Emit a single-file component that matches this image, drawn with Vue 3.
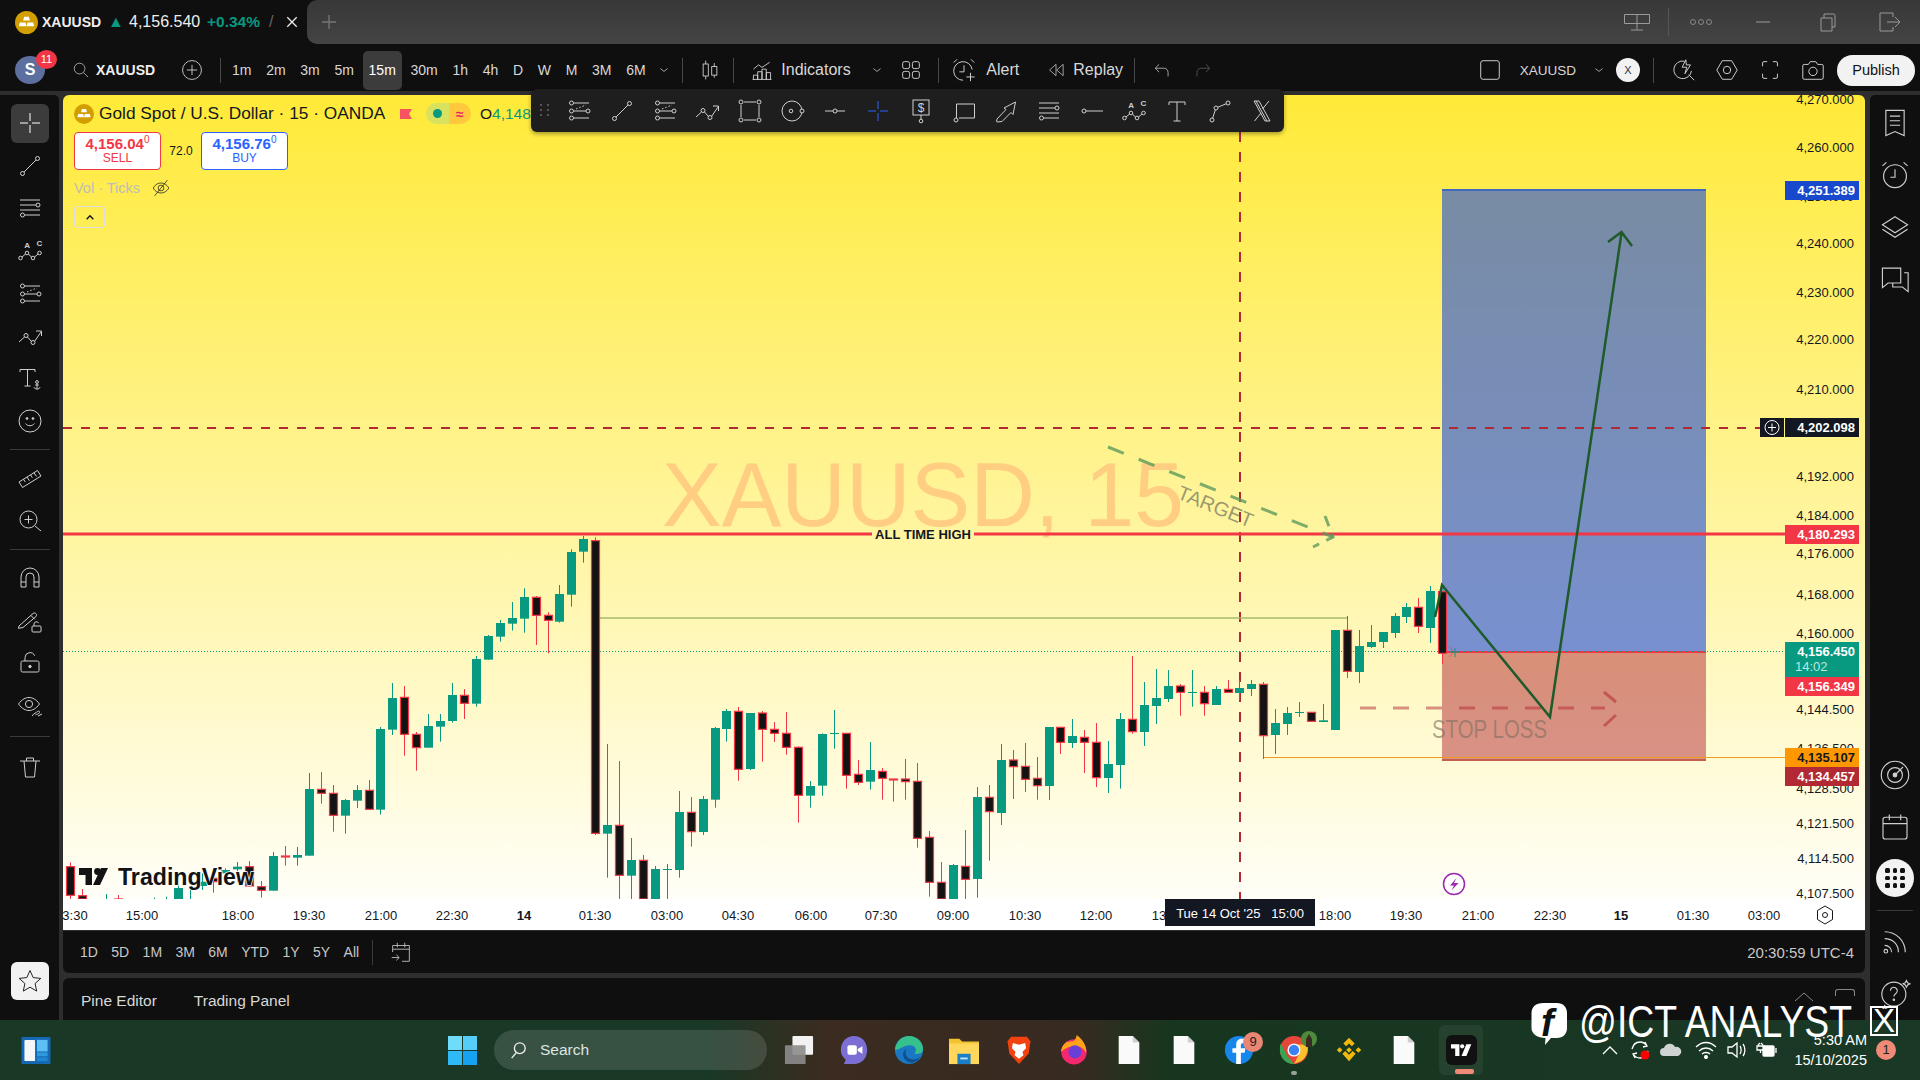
<script setup>
const ic = {
  cross: '<path d="M14 4v8M14 16v8M4 14h8M16 14h8"/>',
  trend: '<circle cx="6.5" cy="21.5" r="2"/><circle cx="21.5" cy="6.5" r="2"/><path d="M8 20 20 8"/>',
  hlines: '<path d="M4 6h20M4 11h16M4 16h20M9 21h15"/><circle cx="22" cy="11" r="2"/><circle cx="6.5" cy="21" r="2"/>',
  abc: '<circle cx="4.5" cy="21" r="1.8"/><circle cx="11" cy="16" r="1.8"/><circle cx="17" cy="21" r="1.8"/><circle cx="23.5" cy="16" r="1.8"/><path d="M6 20 9.6 17M12.4 17.2 15.6 20M18.5 20 22 17"/><text x="8.2" y="11" font-size="8" font-weight="700" fill="currentColor" stroke="none">A</text><text x="20.6" y="9" font-size="8" font-weight="700" fill="currentColor" stroke="none">C</text>',
  fib: '<path d="M9 6h15M9 14h12M9 21h15"/><circle cx="6.5" cy="6" r="2"/><circle cx="6.5" cy="14" r="2"/><circle cx="23" cy="14" r="2"/><circle cx="6.5" cy="21" r="2"/><path stroke-dasharray="1.5 2" d="M11 12 21 8"/>',
  path: '<path d="M3 20 8.5 15M11.5 15l4 4.5M18.5 19.5 25 10M20 9h5.5v5"/><circle cx="10" cy="13.5" r="2"/><circle cx="17" cy="20.5" r="2"/>',
  rect: '<path d="M8 5h12M8 23h12M5 8v12M23 8v12"/><circle cx="5" cy="5" r="2"/><circle cx="23" cy="5" r="2"/><circle cx="5" cy="23" r="2"/><circle cx="23" cy="23" r="2"/>',
  circ: '<circle cx="13" cy="14" r="10"/><circle cx="12" cy="14" r="1.8"/><circle cx="23" cy="14" r="2" fill="#1e1e1e"/>',
  dotline: '<path d="M4 14h8M16 14h8"/><circle cx="14" cy="14" r="2"/>',
  price: '<rect x="6" y="3" width="16" height="15"/><path d="M14 18v4"/><circle cx="14" cy="24" r="1.8"/><text x="14" y="15" text-anchor="middle" font-size="12" fill="currentColor" stroke="none">$</text>',
  callout: '<path d="M6.5 21V7h18v14H9"/><circle cx="6" cy="23" r="2"/>',
  arrow: '<path d="M4.5 24.5 5 22 14 12.5l-2-1.5L23.5 5 21 17.5l-2-2-9 9-5 .5z"/>',
  line: '<circle cx="6" cy="14" r="2"/><path d="M8 14h17"/>',
  text: '<path d="M6 8V5h16v3M14 5v19M10.5 24h7"/>',
  curve: '<circle cx="6" cy="23" r="2"/><circle cx="10" cy="11" r="2"/><circle cx="22" cy="6" r="2"/><path d="M6.7 21 9.3 13M12 10.2 20 6.8"/>',
  xabcd: '<path d="M6 4h5l11 20h-5zM8 4l11 20M21 4l-6.5 8M13 16l-6.5 8"/>',
  textAnchor: '<path d="M4 7V4.5h15V7M11.5 4.5V21M8.5 21h6"/><circle cx="21" cy="17" r="1.4"/><path d="M21 18.4V24M18 22.2c.4 1.4 1.6 1.8 3 1.8s2.6-.4 3-1.8M19.2 20h3.6"/>',
  smile: '<circle cx="14" cy="14" r="11"/><path d="M9.5 16.5c2.4 3 6.6 3 9 0"/><circle cx="11" cy="11.5" r=".9" fill="currentColor"/><circle cx="17" cy="11.5" r=".9" fill="currentColor"/>',
  ruler: '<path d="M3 18 21.5 6.5 25 12 6.5 23.5zM7.5 15.2l1.8 2.8M11 13l2.4 3.7M14.5 10.8l1.8 2.8M18 8.7l2.4 3.7"/>',
  zoom: '<circle cx="12.5" cy="12.5" r="8.5"/><path d="M19 19l6 5M8.5 12.5h8M12.5 8.5v8"/>',
  magnet: '<path d="M5 23V13a9 9 0 0 1 18 0v10h-5V13a4 4 0 0 0-8 0v10zM5 18h5M18 18h5"/>',
  pencil: '<path d="M3 19 17 6.5c1-.8 2.5-.6 3.2.4.6.9.5 2-.3 2.7L7 20.5l-4.5.8zM15 8.5l3.5 3.7"/><rect x="16" y="19" width="9" height="6" rx="1"/><path d="M18 19v-2a2.4 2.4 0 0 1 4.6-.8"/>',
  lock: '<rect x="5" y="12" width="18" height="11" rx="1.5"/><path d="M9 12V8.5a5 5 0 0 1 9.6-1.8"/><circle cx="14" cy="17.5" r="1.2" fill="currentColor"/>',
  eye: '<path d="M2.5 12C6 7 10 5.5 13 5.5s7 1.5 10.5 6.5C20 17 16 18.5 13 18.5S6 17 2.5 12z"/><circle cx="13" cy="12" r="3.6"/><path d="M16 24c2-3 4-3 5.5-4.5 1-1 2.5-.3 2 1-.5 1.6-3 1.6-4 2.4M22 24l4-2"/>',
  trash: '<path d="M4 8h20M8 8l1.5 16h9L20 8M10.5 8V5h7v3"/>',
  star: '<path d="M14 3.5l3.2 7.1 7.6.8-5.7 5.1 1.6 7.6-6.7-3.9-6.7 3.9 1.6-7.6-5.7-5.1 7.6-.8z"/>',
  news: '<path d="M6 3h16v22l-8-3.5L6 25zM9.5 8h9M9.5 12h9M9.5 16h9"/>',
  alarm: '<circle cx="14" cy="15" r="10"/><path d="M14 9v7h-4M3 6l3.5-3M25 6l-3.5-3"/>',
  layers: '<path d="M14 5l11 7-11 7-11-7zM3 16l11 7 11-7"/>',
  chat: '<path d="M3 4.5h16v13H8l-5 4zM22 8.5h3.5v16.5l-5-4H12v-3.5"/>',
  radar: '<circle cx="14" cy="14" r="12"/><circle cx="14" cy="14" r="6.5"/><circle cx="14" cy="14" r="1.6" fill="currentColor"/><path d="M14 14 21 7"/>',
  calendar: '<rect x="3.5" y="5.5" width="21" height="19" rx="2"/><path d="M3.5 11h21M9 3v5M19 3v5"/>',
  rss: '<path d="M5 5c10 0 18 8 18 18M5 11c7 0 12 5 12 12M5 17c3.5 0 6 2.5 6 6"/><circle cx="6" cy="22" r="1.6"/>',
  help: '<circle cx="13" cy="15" r="10.5"/><path d="M10 12a3 3 0 1 1 4.8 2.4c-1.1.8-1.8 1.3-1.8 2.6"/><circle cx="13" cy="20" r=".6" fill="currentColor"/><path d="M24 3l1 2 2 1-2 1-1 2-1-2-2-1 2-1zM5 25l.7 1.3 1.3.7-1.3.7L5 29l-.7-1.3L3 27l1.3-.7z"/>',
  candles: '<path d="M9 3v4M9 21v4M19 6v4M19 20v3"/><rect x="6" y="7" width="6" height="14"/><rect x="16" y="10" width="6" height="10"/>',
  indicators: '<path d="M4 13l6-5 4 3 9-6M4 25v-5h5v5M9 25v-9h5v9M14 25V13h5v12M19 25v-8h5v8M3 25h22"/>',
  grid4: '<rect x="5" y="5" width="7.5" height="7.5" rx="2"/><rect x="15.5" y="5" width="7.5" height="7.5" rx="2"/><rect x="5" y="15.5" width="7.5" height="7.5" rx="2"/><rect x="15.5" y="15.5" width="7.5" height="7.5" rx="2"/>',
  alert: '<path d="M22.8 13.5A10 10 0 1 0 13 25M14 9v7h-5M3 6l3.5-3.5M25 6l-3.5-3.5M21 17v9M16.5 21.5h9"/>',
  replay: '<path d="M14 6 5 14l9 8zM24 6l-9 8 9 8z"/>',
  undo: '<path d="M10 6 4.5 11.5 10 17M5 11.5h11.5c3.5 0 6 2.5 6 6V23"/>',
  redo: '<path d="M18 6l5.5 5.5L18 17M23 11.5H11.5c-3.5 0-6 2.5-6 6V23"/>',
  square: '<rect x="4" y="4" width="20" height="20" rx="2.5"/>',
  lens: '<path d="M14.5 4.5A9.5 9.5 0 1 0 22 15M16 3l-4 8h5l-2 7 6-9.5h-4.5zM19 19l6 6"/>',
  hex: '<path d="M9 4h10l6 10-6 10H9L3 14z"/><circle cx="14" cy="14" r="4"/>',
  screen: '<path d="M6 10V6.5A1.5 1.5 0 0 1 7.5 5H11M17 5h3.5A1.5 1.5 0 0 1 22 6.5V10M22 18v3.5a1.5 1.5 0 0 1-1.5 1.5H17M11 23H7.5A1.5 1.5 0 0 1 6 21.5V18"/>',
  camera: '<path d="M3 9.5A1.5 1.5 0 0 1 4.5 8H9l2-3h6l2 3h4.5A1.5 1.5 0 0 1 25 9.5v13a1.5 1.5 0 0 1-1.5 1.5h-19A1.5 1.5 0 0 1 3 22.5z"/><circle cx="14" cy="15.5" r="4.5"/>',
  search: '<circle cx="12" cy="12" r="7.5"/><path d="M17.5 17.5 24 24"/>',
  addc: '<circle cx="14" cy="14" r="11"/><path d="M14 8v12M8 14h12"/>',
  dateRange: '<path d="M5 7h18v17h-8M5 7v7M5 11h18M10 4v5M18 4v5M4 20h8M9 17l3 3-3 3"/>',
  eyeOff: '<path d="M3 14c3-5 7-7 11-7s8 2 11 7c-3 5-7 7-11 7s-8-2-11-7z"/><circle cx="14" cy="14" r="4"/><path d="M5 25 23 3"/>',
  chevD: '<path d="M9 12l5 4 5-4"/>',
  split: '<path d="M1.5 1.5h25v9h-25zM14 1.5v15M8 17h12"/>',
  minimize: '<path d="M7 14h14"/>',
  restore: '<path d="M9 10h11v13H9zM12 10V6h9.5A1.5 1.5 0 0 1 23 7.5V19h-3"/>',
  exit: '<path d="M18 9V5H5v18h13v-4M12 14h13M20 9l5 5-5 5"/>'
}

const leftGroups = [
  ['cross', 'trend', 'hlines', 'abc', 'fib', 'path', 'textAnchor', 'smile'],
  ['ruler', 'zoom'],
  ['magnet', 'pencil', 'lock', 'eye'],
  ['trash']
]
const rightTop = ['news', 'alarm', 'layers', 'chat']
const drawTools = ['fib', 'trend', 'fib', 'path', 'rect', 'circ', 'dotline', 'cross', 'price', 'callout', 'arrow', 'hlines', 'line', 'abc', 'text', 'curve', 'xabcd']
const intervals = ['1m', '2m', '3m', '5m', '15m', '30m', '1h', '4h', 'D', 'W', 'M', '3M', '6M']
const ranges = ['1D', '5D', '1M', '3M', '6M', 'YTD', '1Y', '5Y', 'All']

// scale labels: text, centre y
const prices = [
  ['4,270.000', 99], ['4,260.000', 147], ['4,250.000', 196], ['4,240.000', 243], ['4,230.000', 292],
  ['4,220.000', 339], ['4,210.000', 389], ['4,192.000', 476], ['4,184.000', 515], ['4,176.000', 553],
  ['4,168.000', 594], ['4,160.000', 633], ['4,144.500', 709], ['4,136.500', 748], ['4,128.500', 788],
  ['4,121.500', 823], ['4,114.500', 858], ['4,107.500', 893]
]
const times = [
  ['3:30', 75], ['15:00', 142], ['18:00', 238], ['19:30', 309], ['21:00', 381], ['22:30', 452], ['14', 524, 1],
  ['01:30', 595], ['03:00', 667], ['04:30', 738], ['06:00', 811], ['07:30', 881], ['09:00', 953], ['10:30', 1025],
  ['12:00', 1096], ['13:30', 1168], ['18:00', 1335], ['19:30', 1406], ['21:00', 1478], ['22:30', 1550], ['15', 1621, 1],
  ['01:30', 1693], ['03:00', 1764]
]
const tags = [
  { y: 181, h: 19, bg: '#1848cc', fg: '#fff', t: '4,251.389' },
  { y: 418, h: 19, bg: '#131722', fg: '#fff', t: '4,202.098' },
  { y: 525, h: 19, bg: '#f23645', fg: '#fff', t: '4,180.293' },
  { y: 677, h: 19, bg: '#f23645', fg: '#fff', t: '4,156.349' },
  { y: 748, h: 19, bg: '#ff9800', fg: '#131722', t: '4,135.107' },
  { y: 767, h: 19, bg: '#b22833', fg: '#fff', t: '4,134.457' }
]

// candles: wick high, body top, body bottom, wick low, up
const raw = [
  [1027,1040,1126,1137,0],[1107,1127,1137,1137,0],[1200,1200,1200,1200,1],[1122,1137,1137,1137,1],[1125,1137,1137,1137,0],
  [1200,1200,1200,1200,1],[1200,1200,1200,1200,1],[1133,1137,1137,1137,1],[1130,1137,1137,1137,1],[1095,1104,1137,1137,1],
  [1105,1137,1137,1137,1],[1060,1085,1098,1110,1],[1065,1075,1085,1118,0],[1045,1050,1060,1078,1],[1026,1040,1048,1085,1],
  [1023,1040,1098,1100,0],[1083,1100,1111,1133,0],[996,1008,1112,1112,1],[978,1008,1010,1037,0],[981,1005,1013,1037,1],
  [759,807,1007,1007,1],[756,808,820,851,0],[795,820,886,935,0],[837,840,887,941,1],[795,810,842,864,1],
  [780,811,868,868,0],[621,627,869,884,1],[489,534,629,645,1],[498,532,643,707,0],[636,643,683,752,0],
  [582,618,683,683,1],[582,603,620,665,1],[489,525,603,608,1],[507,526,550,597,0],[408,417,551,560,1],
  [345,348,419,419,1],[300,309,350,365,1],[246,294,311,332,1],[205,231,296,338,1],[228,232,286,375,0],
  [277,286,301,400,0],[195,222,305,308,1],[88,96,224,260,1],[48,57,95,128,1],[52,62,940,945,0],
  [672,915,941,1073,1],[723,916,1066,1137,0],[954,1020,1067,1137,1],[1005,1021,1137,1137,0],[1038,1047,1137,1137,1],
  [1032,1047,1049,1137,1],[813,876,1050,1073,1],[831,877,935,980,0],[828,837,936,945,1],[621,624,839,863,1],
  [567,573,627,665,1],[561,574,748,782,0],[579,579,747,750,1],
  [573,579,628,725,0],[606,628,640,666,0],[576,640,682,704,0],[679,682,826,908,0],[783,798,827,863,1],
  [640,642,797,827,1],[570,639,641,686,1],[640,640,766,806,0],[720,763,787,795,0],[666,750,785,809,1],
  [744,754,775,839,0],[777,777,779,845,0],[717,777,785,839,0],[729,784,955,983,0],[933,952,1087,1130,0],
  [1026,1087,1137,1137,0],[1032,1035,1137,1137,1],[930,1039,1078,1137,0],[801,831,1077,1133,1],[795,832,875,1022,0],
  [672,720,879,915,1],[690,720,740,837,0],[669,739,778,816,0],[711,775,797,839,0],[621,621,798,840,1],
  [621,622,667,702,0],[597,648,669,684,1],[630,652,667,759,0],[609,667,773,801,0],[663,732,774,819,1],
  [579,597,735,806,1],[408,598,635,641,0],[486,555,636,678,1],[447,534,558,612,1],[450,498,537,546,1],
  [492,498,517,587,0],[450,516,519,560,1],[498,517,551,587,0],[498,507,555,555,1],[480,508,517,517,0],
  [480,504,519,541,1],[480,492,507,528,1],[486,493,647,717,0],[567,609,645,702,1],[561,579,612,645,1],
  [546,576,578,591,1],[576,577,604,606,0],[552,601,606,606,1],[330,330,630,630,1],[288,331,454,474,0],
  [330,378,456,489,1],[315,366,381,384,1],[336,336,366,384,1],[279,288,339,354,1],[249,261,291,309,1],
  [234,262,319,339,0],[198,213,324,369,1],[215,215,400,432,0]
]
const py = (v) => 520 + v / 3
const bars = raw.map((b, i) => ({
  x: Math.round(70.3 + i * 11.93),
  hi: py(b[0]),
  top: py(b[1]),
  h: Math.max(py(b[2]) - py(b[1]), 1),
  lo: py(b[3]),
  up: b[4] === 1
}))

const apps = ['task', 'meet', 'edge', 'folder', 'brave', 'firefox', 'doc', 'doc', 'fb', 'chrome', 'binance', 'doc']
</script>

<template>
  <div class="screen">
    <header class="titlebar">
      <div class="tab">
        <svg class="gold" viewBox="0 0 24 24"><circle cx="12" cy="12" r="12" fill="#d39e00"/><path d="M9.5 6h5l1 4h-7zM5 12h6l1 4H4zM13 12h6l1 4h-8z" fill="#fff"/></svg>
        <b class="sym">XAUUSD</b>
        <span class="tri">▲</span>
        <span class="tp">4,156.540</span>
        <b class="tc">+0.34%</b>
        <span class="ts">/</span>
        <svg class="tx" viewBox="0 0 14 14"><path d="M1.5 1.5l11 11M12.5 1.5l-11 11"/></svg>
      </div>
      <div class="winrest">
        <svg class="tplus" viewBox="0 0 16 16"><path d="M8 0v16M0 8h16"/></svg>
        <div class="fill"></div>
        <svg class="ic dim wide" viewBox="0 0 28 18" v-html="ic.split"></svg>
        <i class="wsep"></i>
        <svg class="dots" viewBox="0 0 24 8"><circle cx="4" cy="4" r="2.5"/><circle cx="12" cy="4" r="2.5"/><circle cx="20" cy="4" r="2.5"/></svg>
        <svg class="ic dim wbtn" viewBox="0 0 28 28" v-html="ic.minimize"></svg>
        <svg class="ic dim wbtn" viewBox="0 0 28 28" v-html="ic.restore"></svg>
        <svg class="ic dim wbtn" viewBox="0 0 28 28" v-html="ic.exit"></svg>
      </div>
    </header>

    <nav class="toolbar">
      <div class="avatar">S<span class="badge">11</span></div>
      <svg class="ic sic" viewBox="0 0 28 28" v-html="ic.search"></svg>
      <b class="tsym">XAUUSD</b>
      <svg class="ic addc" viewBox="0 0 28 28" v-html="ic.addc"></svg>
      <i class="sep"></i>
      <div class="ivs">
        <span v-for="iv in intervals" :key="iv" class="iv" :class="{ on: iv === '15m' }">{{ iv }}</span>
        <svg class="ic chev" viewBox="0 0 28 28" v-html="ic.chevD"></svg>
      </div>
      <i class="sep s2"></i>
      <svg class="ic cndl" viewBox="0 0 28 28" v-html="ic.candles"></svg>
      <i class="sep s3"></i>
      <svg class="ic ind" viewBox="0 0 28 28" v-html="ic.indicators"></svg>
      <span class="lbl ind-l">Indicators</span>
      <svg class="ic chev ind-c" viewBox="0 0 28 28" v-html="ic.chevD"></svg>
      <svg class="ic grid4" viewBox="0 0 28 28" v-html="ic.grid4"></svg>
      <i class="sep s4"></i>
      <svg class="ic al" viewBox="0 0 28 28" v-html="ic.alert"></svg>
      <span class="lbl al-l">Alert</span>
      <svg class="ic re" viewBox="0 0 28 28" v-html="ic.replay"></svg>
      <span class="lbl re-l">Replay</span>
      <i class="sep s5"></i>
      <svg class="ic un" viewBox="0 0 28 28" v-html="ic.undo"></svg>
      <svg class="ic rd" viewBox="0 0 28 28" v-html="ic.redo"></svg>
      <div class="fill"></div>
      <svg class="ic sq" viewBox="0 0 28 28" v-html="ic.square"></svg>
      <span class="xs">XAUUSD</span>
      <svg class="ic chev xc" viewBox="0 0 28 28" v-html="ic.chevD"></svg>
      <span class="xbtn">X</span>
      <i class="sep s6"></i>
      <svg class="ic r-i" viewBox="0 0 28 28" v-html="ic.lens"></svg>
      <svg class="ic r-i" viewBox="0 0 28 28" v-html="ic.hex"></svg>
      <svg class="ic r-i" viewBox="0 0 28 28" v-html="ic.screen"></svg>
      <svg class="ic r-i" viewBox="0 0 28 28" v-html="ic.camera"></svg>
      <button class="publish">Publish</button>
    </nav>

    <main class="body">
      <aside class="lefttools">
        <template v-for="(g, gi) in leftGroups" :key="gi">
          <i v-if="gi" class="lsep" :class="{ tight: gi === 1, last: gi === 3 }"></i>
          <div v-for="n in g" :key="n" class="ltool" :class="{ on: n === 'cross' }">
            <svg class="ic" viewBox="0 0 28 28" v-html="ic[n]"></svg>
          </div>
        </template>
        <div class="starbtn"><svg class="ic" viewBox="0 0 28 28" v-html="ic.star"></svg></div>
      </aside>

      <section class="center">
        <div class="chart">
          <svg class="plot" width="1802" height="835" viewBox="63 95 1802 835">
            <defs>
              <linearGradient id="paper" x1="0" y1="0" x2="0" y2="1">
                <stop offset="0" stop-color="#ffea38"/>
                <stop offset="1" stop-color="#ffffff"/>
              </linearGradient>
            </defs>
            <rect x="63" y="95" width="1802" height="835" fill="url(#paper)"/>
            <rect x="63" y="899" width="1802" height="31" fill="#fff"/>
            <text x="662" y="526" textLength="522" lengthAdjust="spacingAndGlyphs" class="mark">XAUUSD, 15</text>
            <rect x="1442" y="190" width="264" height="462" fill="rgba(30,75,220,.6)"/>
            <rect x="1442" y="652" width="264" height="109" fill="rgba(178,40,51,.5)"/>
            <path d="M1442 190h264" stroke="#3f68c0" stroke-width="2"/>
            <path d="M1442 652h264" stroke="#f23645" stroke-width="2"/>
            <path d="M1442 760h264" stroke="#c0503c" stroke-width="1.5"/>
            <path d="M63 651.5H1785" stroke="#089981" stroke-dasharray="1 2"/>
            <path d="M63 428H1785" stroke="#b22833" stroke-width="1.8" stroke-dasharray="9 9"/>
            <path d="M1240 132V899" stroke="#b22833" stroke-width="2" stroke-dasharray="10 10"/>
            <path d="M63 534H872M974 534H1785" stroke="#f23645" stroke-width="3"/>
            <path d="M600 618H1347" stroke="#a6ba6e" stroke-width="1.5"/>
            <path d="M1263 757.5H1785" stroke="#f09a1e" stroke-width="1.2"/>
            <text x="923" y="539" class="ath">ALL TIME HIGH</text>
            <g>
              <svg x="63" y="95" width="1722" height="804" viewBox="63 95 1722 804">
                <g v-for="(b, i) in bars" :key="i">
                  <path :d="`M${b.x + 0.5} ${b.hi}V${b.lo}`" :stroke="b.up ? '#089981' : '#f23645'"/>
                  <rect v-if="b.up" :x="b.x - 4" :y="b.top" width="9" :height="b.h" fill="#089981"/>
                  <rect v-else :x="b.x - 3.5" :y="b.top" width="8" :height="b.h" fill="#131313" stroke="#f23645" stroke-width="1.2"/>
                </g>
              </svg>
            </g>
            <path d="M1108 447 1333 537" stroke="#5e9a5c" stroke-opacity=".8" stroke-width="3" stroke-dasharray="17 16" fill="none"/>
            <path d="M1325 516 1333 537 1313 547" stroke="#5e9a5c" stroke-opacity=".8" stroke-width="3" stroke-dasharray="11 8" fill="none"/>
            <text transform="translate(1176 498) rotate(22)" class="tgt">TARGET</text>
            <path d="M1360 708H1605" stroke="#b22833" stroke-opacity=".5" stroke-width="3" stroke-dasharray="16 17" fill="none"/>
            <path d="M1604 692 1616 702M1616 715 1604 726" stroke="#b22833" stroke-opacity=".55" stroke-width="3" fill="none"/>
            <text x="1432" y="738" textLength="115" lengthAdjust="spacingAndGlyphs" class="stop">STOP LOSS</text>
            <path d="M1435 617 1442 585 1550 717 1621.5 233M1608 242 1621.5 232 1632 246" stroke="#1e5a2a" stroke-width="2.5" fill="none"/>
            <path d="M1450 652h9M1455 648v9" stroke="#089981"/>
            <path d="M1449 646l5 6-5 5" stroke="#f23645" stroke-opacity=".6" fill="none"/>
            <circle cx="1454" cy="884" r="10.5" fill="#fff" stroke="#9c27b0" stroke-width="1.5"/>
            <path d="M1456.5 878 1450 885.5h4l-2.5 5 7-7.5h-4.5z" fill="#9c27b0"/>

            <g class="tvmark">
              <path d="M79 868h13v17h-6.5V875H79zM108 868 100 885h-7l8-17z" stroke="#fff" stroke-width="1" paint-order="stroke"/>
              <circle cx="97.5" cy="871.5" r="3.4"/>
              <text x="118" y="885" textLength="136" lengthAdjust="spacingAndGlyphs" class="tvtext">TradingView</text>
            </g>

            <text v-for="p in prices" :key="p[0]" x="1854" :y="p[1] + 5" class="px">{{ p[0] }}</text>
            <g v-for="t in tags" :key="t.t">
              <rect x="1785" :y="t.y" width="74" :height="t.h" :fill="t.bg"/>
              <text x="1855" :y="t.y + 14" class="tagt" :fill="t.fg">{{ t.t }}</text>
            </g>
            <rect x="1785" y="642" width="74" height="35" fill="#089981"/>
            <text x="1855" y="656" class="tagt" fill="#fff">4,156.450</text>
            <text x="1795" y="671" class="cnt">14:02</text>
            <rect x="1760" y="418" width="24" height="19" fill="#131722"/>
            <circle cx="1772" cy="427.5" r="7" fill="none" stroke="#fff"/>
            <path d="M1772 423.5v8M1768 427.5h8" stroke="#fff"/>

            <text v-for="t in times" :key="t[0] + t[1]" :x="t[1]" y="920" class="tm" :class="{ bold: t[2] }">{{ t[0] }}</text>
            <rect x="1165" y="899" width="150" height="27" fill="#131722"/>
            <text x="1240" y="918" class="tmc">Tue 14 Oct '25&#160;&#160;&#160;15:00</text>
            <path d="M1825 906l7.5 4.5v9l-7.5 4.5-7.5-4.5v-9z" fill="none" stroke="#131722"/>
            <circle cx="1825" cy="915" r="2.5" fill="none" stroke="#131722"/>
          </svg>

          <div class="legend">
            <div class="lrow">
              <svg class="gold2" viewBox="0 0 24 24"><circle cx="12" cy="12" r="12" fill="#d39e00"/><path d="M9.5 6h5l1 4h-7zM5 12h6l1 4H4zM13 12h6l1 4h-8z" fill="#fff"/></svg>
              <span class="lname">Gold Spot / U.S. Dollar · 15 · OANDA</span>
              <svg class="flag" viewBox="0 0 12 10"><path d="M0 0h12L9 5l3 5H0z" fill="#f7525f"/></svg>
              <span class="pill"><em class="pl"><i></i></em><em class="pr">≈</em></span>
              <span class="ohlc">O<b>4,148.</b></span>
            </div>
            <div class="trade">
              <div class="tbox sell"><b>4,156.04<sup>0</sup></b><span>SELL</span></div>
              <span class="spread">72.0</span>
              <div class="tbox buy"><b>4,156.76<sup>0</sup></b><span>BUY</span></div>
            </div>
            <div class="vol">
              <span>Vol · Ticks</span>
              <svg class="ic v-e" viewBox="0 0 28 28" v-html="ic.eyeOff"></svg>
            </div>
            <div class="collapse"><svg viewBox="0 0 12 8"><path d="M2 6l4-4 4 4"/></svg></div>
          </div>

          <div class="drawbar">
            <span class="grip"><i v-for="n in 6" :key="n"></i></span>
            <span v-for="(n, i) in drawTools" :key="i" class="dt" :class="{ blue: i === 7 }">
              <svg class="ic" viewBox="0 0 28 28" v-html="ic[n]"></svg>
            </span>
          </div>
        </div>

        <div class="ranges">
          <span v-for="r in ranges" :key="r" class="rg">{{ r }}</span>
          <i class="rsep"></i>
          <svg class="ic rcal" viewBox="0 0 28 28" v-html="ic.dateRange"></svg>
          <div class="fill"></div>
          <span class="clock">20:30:59 UTC-4</span>
        </div>

        <div class="panel">
          <span class="ptab">Pine Editor</span>
          <span class="ptab">Trading Panel</span>
          <div class="fill"></div>
          <svg class="pup" viewBox="0 0 20 10"><path d="M1 9l9-8 9 8"/></svg>
          <i class="pmax"></i>
        </div>
      </section>

      <aside class="righttools">
        <div v-for="n in rightTop" :key="n" class="rtool"><svg class="ic" viewBox="0 0 28 28" v-html="ic[n]"></svg></div>
        <div class="fill"></div>
        <div class="rtool"><svg class="ic" viewBox="0 0 28 28" v-html="ic.radar"></svg></div>
        <div class="rtool"><svg class="ic" viewBox="0 0 28 28" v-html="ic.calendar"></svg></div>
        <div class="appsbtn"><i v-for="n in 9" :key="n"></i></div>
        <i class="rsp"></i>
        <div class="rtool"><svg class="ic" viewBox="0 0 28 28" v-html="ic.rss"></svg></div>
        <div class="rtool hp"><svg class="ic" viewBox="0 0 28 28" v-html="ic.help"></svg></div>
      </aside>
    </main>

    <footer class="taskbar">
      <svg class="widgets" viewBox="0 0 30 28">
        <rect width="30" height="28" rx="1" fill="#1668b4"/>
        <rect x="3" y="3" width="11" height="22" rx="1" fill="#f4f6f8"/>
        <rect x="16" y="3" width="11" height="12" fill="#5cc0f4"/>
        <rect x="16" y="16" width="11" height="4" fill="#2e9be0"/>
        <rect x="16" y="21" width="11" height="4" fill="#1f85ce"/>
      </svg>
      <svg class="start" viewBox="0 0 29 29">
        <rect width="14" height="14" fill="#6fdcfb"/><rect x="15" width="14" height="14" fill="#55cdf8"/>
        <rect y="15" width="14" height="14" fill="#2dbaf6"/><rect x="15" y="15" width="14" height="14" fill="#16a2f0"/>
      </svg>
      <div class="searchbox">
        <svg viewBox="0 0 20 20"><circle cx="12" cy="8" r="6"/><path d="M8 13l-5 6"/></svg>
        <span>Search</span>
      </div>
      <span v-for="(a, i) in apps" :key="i" class="app">
        <svg v-if="a === 'task'" viewBox="0 0 32 32"><rect x="9" y="1" width="22" height="20" rx="1" fill="#f2f2f2"/><rect x="1" y="11" width="22" height="20" rx="1" fill="#8c8c8c" opacity=".9"/></svg>
        <svg v-else-if="a === 'meet'" viewBox="0 0 32 32"><path d="M16 1c8 0 14 6 14 15s-6 15-14 15H5c1-2 2-3 2-5-4-3-5-7-5-10C2 7 8 1 16 1z" fill="#7b6fd6"/><rect x="9" y="11" width="10" height="10" rx="2" fill="#fff"/><path d="M20 15l5-3v8l-5-3z" fill="#fff"/></svg>
        <svg v-else-if="a === 'edge'" viewBox="0 0 32 32"><circle cx="16" cy="16" r="15" fill="#1a78c2"/><path d="M1 16C2 6 9 1 16 1c9 0 15 7 15 14 0 4-4 6-9 5 3-4 1-9-5-9-7 0-11 5-16 5z" fill="#36c08c"/><path d="M14 28c-5-3-6-10-1-13-3 8 4 12 9 11 2-.5 4-1 6-3-3 6-9 8-14 5z" fill="#0f4f8f"/></svg>
        <svg v-else-if="a === 'folder'" viewBox="0 0 32 32"><path d="M0 4h11l3 3h18v24H0z" fill="#f4c430"/><path d="M0 9h32v22H0z" fill="#ffd75a"/><rect x="9" y="20" width="14" height="11" fill="#1a7fc8"/><rect x="12" y="24" width="8" height="2" fill="#bfe3fa"/></svg>
        <svg v-else-if="a === 'brave'" viewBox="0 0 30 34"><path d="M6 2h18l4 5-2 14-11 12L4 21 2 7z" fill="#f1420f"/><path d="M8 9l7 2 7-2 1 6-4 4 1 4-5 4-5-4 1-4-4-4z" fill="#fff"/></svg>
        <svg v-else-if="a === 'firefox'" viewBox="0 0 32 32"><circle cx="16" cy="18" r="13.5" fill="#f5276f"/><path d="M2 18C3 9 9 6 14 7c4-1 4-4 5-7 2 2 11 8 10 19-4-7-9-7-13-7-6 0-10 3-14 6z" fill="#ffa31a"/><circle cx="17" cy="18" r="7" fill="#6a3fd6"/></svg>
        <svg v-else-if="a === 'doc'" viewBox="0 0 24 32"><path d="M1 1h15l7 7v23H1z" fill="#fafafa"/><path d="M16 1v7h7" fill="#cfcfcf"/></svg>
        <svg v-else-if="a === 'fb'" viewBox="0 0 32 32"><circle cx="16" cy="16" r="15" fill="#1787ec"/><path d="M18 31V19h4l.8-5H18v-3c0-1.5.7-2.5 2.7-2.5H23V4.2C21 4 20 4 18.8 4 15 4 13 6.5 13 10.5V14H9v5h4v12z" fill="#fff"/></svg>
        <svg v-else-if="a === 'chrome'" viewBox="0 0 32 32"><circle cx="16" cy="16" r="15" fill="#e6453a"/><path d="M2 9l7 14 7 8C7 31 1 24 1 16c0-3 0-5 1-7z" fill="#33a853"/><path d="M16 10h14c2 5 0 14-7 18l-7 3 7-14z" fill="#fbc02d"/><circle cx="16" cy="16" r="7" fill="#fff"/><circle cx="16" cy="16" r="5.5" fill="#3b82f6"/></svg>
        <svg v-else-if="a === 'binance'" viewBox="0 0 32 32" fill="#f0b90b"><path d="M16 3l6 6-3 3-3-3-3 3-3-3zM6 13l3 3-3 3-3-3zM26 13l3 3-3 3-3-3zM16 13l3 3-3 3-3-3zM9 20l3-3 4 4 4-4 3 3-7 8z"/></svg>
        <span v-if="a === 'fb'" class="count">9</span>
        <svg v-if="a === 'chrome'" class="peer" viewBox="0 0 16 20"><circle cx="8" cy="10" r="8" fill="#4d8a3a"/><path d="M5 18V10l3-5 3 5v8z" fill="#3a2c22"/></svg>
        <i v-if="a === 'chrome'" class="open"></i>
      </span>
      <span class="app tvapp">
        <span class="tvicon"><svg viewBox="0 0 30 18" fill="#fff"><path d="M0 0h12v17H6V6H0z"/><circle cx="16" cy="3" r="3"/><path d="M29 0 22 17h-7l7-17z"/></svg></span>
        <i class="tvbar"></i>
      </span>
      <div class="fill"></div>
      <div class="tray">
        <svg class="t1" viewBox="0 0 16 10"><path d="M1 9l7-7 7 7"/></svg>
        <svg class="t2" viewBox="0 0 20 20"><path d="M2 9c1-4 4-7 8-7 3 0 5 1 7 4M15 2l2 4-4 1M18 11c-1 4-4 7-8 7-3 0-5-1-7-4M5 18l-2-4 4-1"/><circle class="rec" cx="15" cy="15" r="4.5"/></svg>
        <svg class="t3" viewBox="0 0 22 14"><path d="M4 13a4 4 0 0 1 0-8 6 6 0 0 1 11-1 4.5 4.5 0 0 1 3 9z" fill="#cfd4d2" stroke="none"/></svg>
        <svg class="t4" viewBox="0 0 22 18"><path d="M1 6c6-6 14-6 20 0M4 10c4-4 10-4 14 0M7 13c2-2 6-2 8 0"/><circle cx="11" cy="16" r="1.4" fill="#fff"/></svg>
        <svg class="t5" viewBox="0 0 20 18"><path d="M1 6h4l5-4v14l-5-4H1zM13 5c1.5 2 1.5 6 0 8M16 3c2.5 3 2.5 9 0 12"/></svg>
        <svg class="t6" viewBox="0 0 22 16"><path d="M2 3l2-2M7 3 5 1M1 4h7v4H1zM4.5 8v3"/><rect x="7" y="4" width="11" height="10" rx="1" fill="#fff"/><path d="M20 6v5"/></svg>
        <div class="when"><span>5:30 AM</span><span>15/10/2025</span></div>
        <span class="note">1</span>
      </div>
    </footer>

    <svg class="brand" width="390" height="50" viewBox="1530 1000 390 50">
      <path d="M1543 1003h14c6 0 10 4 10 10v15c0 6-4 10-10 10h-6l-6 7 .5-7c-8 0-14-4-14-10v-15c0-6 4-10 12-10z" fill="#fff"/>
      <text x="1541" y="1036" class="f">f</text>
      <text x="1579" y="1037" textLength="273" lengthAdjust="spacingAndGlyphs" class="handle">@ICT ANALYST</text>
      <rect x="1871" y="1007" width="26" height="28" fill="none" stroke="#fff" stroke-width="2"/>
      <text x="1884" y="1032" text-anchor="middle" class="handlex">X</text>
    </svg>
  </div>
</template>

<style>
html, body { margin: 0; background: #0f0f0f; }
</style>

<style scoped>
.screen {
  position: relative;
  width: 1920px;
  height: 1080px;
  display: flex;
  flex-direction: column;
  overflow: hidden;
  background: #2e2e2e;
  color: #dbdbdb;
  font: 14px "Liberation Sans", Arial, sans-serif;
}
.fill { flex: 1; }
.ic {
  width: 28px;
  height: 28px;
  flex: none;
  fill: none;
  stroke: currentColor;
  stroke-width: 1;
}

.titlebar { height: 44px; display: flex; background: #0f0f0f; flex: none; }
.tab { width: 307px; display: flex; align-items: center; padding-left: 15px; box-sizing: border-box; color: #eee; font-size: 16px; }
.gold { width: 23px; height: 23px; margin-right: 4px; }
.sym { width: 66px; font-size: 14px; }
.tri { color: #089981; font-size: 16px; width: 21px; }
.tp { width: 78px; }
.tc { color: #089981; width: 62px; font-weight: 700; font-size: 15.5px; }
.ts { color: #666; width: 13px; }
.tx { width: 12px; height: 12px; stroke: #eee; stroke-width: 1.5; fill: none; margin-left: 4px; }
.winrest {
  flex: 1;
  background: linear-gradient(#383838, #444);
  border-radius: 10px 0 0 10px;
  display: flex;
  align-items: center;
  color: #9a9a9a;
}
.tplus { width: 14px; height: 14px; margin-left: 15px; stroke: #777; stroke-width: 1.5; }
.wide { width: 28px; height: 18px; margin-right: 17px; }
.wsep { width: 1px; height: 28px; background: #565656; margin-right: 20px; }
.dots { width: 24px; height: 8px; fill: none; stroke: #888; margin-right: 36px; }
.wbtn { margin-right: 35px; }
.wbtn:last-of-type { margin-right: 17px; }

.toolbar { height: 47px; flex: none; box-sizing: border-box; padding-top: 5px; display: flex; align-items: center; background: #0f0f0f; color: #d8d8d8; }
.avatar {
  position: relative;
  width: 30px;
  height: 28px;
  margin-left: 15px;
  border-radius: 50%;
  background: #5d6f9f;
  color: #fff;
  font-weight: 700;
  font-size: 16px;
  line-height: 28px;
  text-align: center;
}
.badge {
  position: absolute;
  left: 21px;
  top: -6px;
  width: 21px;
  height: 19px;
  border-radius: 50%;
  background: #f23645;
  font-size: 11px;
  line-height: 19px;
  font-weight: 400;
}
.sic { width: 20px; height: 20px; margin-left: 26px; }
.tsym { margin-left: 5px; width: 60px; color: #eee; }
.addc { width: 24px; height: 24px; margin-left: 24px; }
.sep { width: 1px; height: 25px; background: #474747; flex: none; }
.toolbar > .sep { margin-left: 16px; }
.ivs { display: flex; align-items: center; gap: 2.7px; margin-left: 5px; }
.iv { height: 39px; line-height: 39px; padding: 0 6px; border-radius: 5px; }
.iv.on { background: #3c3c3c; color: #fff; }
.chev { width: 20px; height: 20px; }
.toolbar > .sep.s2 { margin-left: 8px; }
.cndl { width: 24px; height: 24px; margin-left: 15px; }
.toolbar > .sep.s3 { margin-left: 11px; }
.ind { width: 24px; height: 24px; margin-left: 16px; }
.lbl { font-size: 16px; }
.ind-l { margin-left: 7px; width: 72px; white-space: nowrap; }
.ind-c { margin-left: 14px; }
.grid4 { width: 26px; height: 26px; margin-left: 11px; }
.toolbar > .sep.s4 { margin-left: 14px; }
.al { width: 26px; height: 26px; margin-left: 12px; }
.al-l { margin-left: 9px; width: 36px; }
.re { width: 20px; height: 20px; margin-left: 24px; }
.re-l { margin-left: 7px; width: 48px; white-space: nowrap; }
.toolbar > .sep.s5 { margin-left: 13px; }
.un { width: 20px; height: 20px; margin-left: 17px; }
.rd { width: 20px; height: 20px; margin-left: 21px; color: #666; }
.sq { width: 26px; height: 26px; }
.xs { margin-left: 17px; font-size: 13.5px; }
.xc { margin-left: 13px; }
.xbtn { width: 24px; height: 24px; border-radius: 50%; margin-left: 7px; background: #f2f2f2; color: #333; font-size: 11px; line-height: 24px; text-align: center; }
.toolbar > .sep.s6 { margin-left: 13px; }
.r-i { width: 26px; height: 26px; margin-left: 17px; }
.r-i:first-of-type { margin-left: 13px; }
.publish {
  width: 78px;
  height: 31px;
  margin: 0 5px 0 11px;
  border: 0;
  border-radius: 16px;
  background: #f2f2f2;
  color: #111;
  font: 14.5px "Liberation Sans", Arial, sans-serif;
}

.body { flex: 1; min-height: 0; display: flex; padding-top: 4px; }
.lefttools {
  width: 59px;
  flex: none;
  margin-right: 4px;
  padding: 7px 0 20px;
  box-sizing: border-box;
  display: flex;
  flex-direction: column;
  align-items: center;
  background: #0f0f0f;
  border-top-right-radius: 5px;
  color: #cfcfcf;
}
.ltool { width: 38px; height: 42.6px; display: flex; align-items: center; justify-content: center; position: relative; }
.ltool.on::before { content: ""; position: absolute; inset: 2px 0; background: #3c3c3c; border-radius: 6px; }
.ltool .ic { position: relative; }
.ltool.on { color: #fff; }
.lsep { width: 40px; height: 1px; background: #3a3a3a; flex: none; margin: 7px 0; }
.lsep.tight { margin: 6.5px 0; }
.lsep.last { margin: 8.5px 0; }
.starbtn { margin-top: auto; width: 38px; height: 38px; border-radius: 6px; background: #f2f2f2; color: #222; display: flex; align-items: center; justify-content: center; }

.center { width: 1802px; flex: none; display: flex; flex-direction: column; }
.chart { position: relative; height: 835px; flex: none; }
.plot { display: block; border-radius: 6px 6px 0 0; }
.mark { font-size: 90px; fill: #ffc77f; fill-opacity: .85; }
.ath { font-size: 13px; font-weight: 700; fill: #131722; text-anchor: middle; }
.tgt { font-size: 20px; fill: #7a7a60; fill-opacity: .75; }
.stop { font-size: 25px; fill: #7c6f60; fill-opacity: .6; }
.tvmark { fill: #131313; }
.tvtext { font-size: 24px; font-weight: 700; stroke: #fff; stroke-width: 1.5; paint-order: stroke; }
.px { font-size: 13px; text-anchor: end; fill: #131722; }
.tagt { font-size: 13px; font-weight: 700; text-anchor: end; }
.cnt { font-size: 13px; fill: #bfe6de; }
.tm { font-size: 13px; text-anchor: middle; fill: #131722; }
.tm.bold { font-weight: 700; }
.tmc { font-size: 13px; text-anchor: middle; fill: #fff; }

.legend { position: absolute; left: 11px; top: 8px; display: flex; flex-direction: column; color: #131722; }
.lrow { display: flex; align-items: center; height: 21px; }
.gold2 { width: 20px; height: 20px; margin-right: 5px; }
.lname { font-size: 17.3px; width: 301px; white-space: nowrap; }
.flag { width: 12px; height: 10px; margin-right: 14px; }
.pill { display: flex; width: 45px; height: 21px; border-radius: 11px; overflow: hidden; }
.pill em { flex: 1; display: flex; align-items: center; justify-content: center; font-style: normal; }
.pl { background: #d9e25f; }
.pl i { width: 9px; height: 9px; border-radius: 50%; background: #089981; }
.pr { background: #ffc83d; color: #e91e63; font-weight: 700; font-size: 14px; }
.ohlc { margin-left: 9px; font-size: 15.5px; }
.ohlc b { font-weight: 400; color: #089981; }
.trade { display: flex; align-items: center; margin-top: 8px; }
.tbox {
  width: 87px;
  height: 38px;
  box-sizing: border-box;
  background: #fff;
  border: 1px solid;
  border-radius: 4px;
  display: flex;
  flex-direction: column;
  align-items: center;
  justify-content: center;
  font-size: 12px;
  line-height: 15px;
}
.tbox b { font-size: 15px; }
.tbox sup { font-size: 10px; line-height: 0; font-weight: 400; }
.sell { color: #f23645; border-color: #f23645; }
.buy { color: #2962ff; border-color: #2962ff; }
.spread { width: 40px; text-align: center; font-size: 12px; }
.vol { display: flex; align-items: center; height: 20px; margin-top: 8px; color: #bdbdb5; font-size: 14.5px; }
.v-e { width: 20px; height: 20px; color: #131722; margin-left: 11px; }
.collapse { width: 31px; height: 22px; margin-top: 8px; box-sizing: border-box; border: 1px solid #ddd; border-radius: 3px; display: flex; align-items: center; justify-content: center; }
.collapse svg { width: 10px; height: 7px; fill: none; stroke: #131722; stroke-width: 1.8; }

.drawbar {
  position: absolute;
  left: 468px;
  top: -6px;
  width: 753px;
  height: 43px;
  box-sizing: border-box;
  padding-left: 27px;
  display: flex;
  align-items: center;
  background: #1e1e1e;
  border-radius: 6px;
  box-shadow: 0 2px 4px rgba(0, 0, 0, .35);
  color: #cfcfcf;
}
.grip { position: absolute; left: 9px; top: 15px; width: 10px; display: grid; grid-template-columns: 1fr 1fr; gap: 3px; }
.grip i { width: 2px; height: 2px; background: #555; }
.dt { width: 42.7px; display: flex; justify-content: center; flex: none; }
.dt.blue { color: #2962ff; }

.ranges {
  height: 42px;
  margin-top: 1px;
  flex: none;
  display: flex;
  align-items: center;
  padding-left: 17px;
  padding-right: 11px;
  background: #0f0f0f;
  border-radius: 0 0 6px 6px;
  color: #c8c8c8;
  font-size: 14px;
}
.rg { margin-right: 13.4px; }
.rsep { width: 1px; height: 25px; background: #3a3a3a; margin-left: -1px; }
.rcal { width: 26px; height: 26px; margin-left: 15.5px; color: #bbb; }
.clock { font-size: 15px; }
.panel {
  height: 42px;
  margin-top: 5px;
  flex: none;
  box-sizing: border-box;
  padding-top: 3px;
  display: flex;
  align-items: center;
  background: #0f0f0f;
  border-radius: 6px 6px 0 0;
  padding-left: 18px;
  padding-right: 10px;
  color: #d8d8d8;
  font-size: 15.5px;
}
.ptab { margin-right: 37px; }
.pup { width: 20px; height: 10px; fill: none; stroke: #888; margin-right: 21px; margin-bottom: 8px; }
.pmax { width: 18px; height: 6px; border: 1px solid #888; border-bottom: 0; border-radius: 3px 3px 0 0; margin-bottom: 17px; }

.righttools {
  width: 50px;
  flex: none;
  margin-left: 5px;
  box-sizing: border-box;
  padding: 2px 0 2px;
  display: flex;
  flex-direction: column;
  align-items: center;
  background: #0f0f0f;
  border-top-left-radius: 5px;
  color: #cfcfcf;
}
.rtool { height: 52px; display: flex; align-items: center; justify-content: center; flex: none; }
.rtool .ic { width: 32px; height: 32px; }
.appsbtn {
  width: 38px;
  height: 38px;
  border-radius: 50%;
  background: #f2f2f2;
  margin: 6px 0 13px;
  box-sizing: border-box;
  padding: 9px;
  display: grid;
  grid-template-columns: repeat(3, 1fr);
  gap: 3px;
  flex: none;
}
.appsbtn i { background: #111; border-radius: 1.5px; }
.rsp { width: 36px; height: 1px; background: #3a3a3a; margin: 0 0 5px; flex: none; }
.hp { height: 50px; }

.taskbar {
  height: 60px;
  flex: none;
  display: flex;
  align-items: center;
  background: linear-gradient(90deg, #1a3826 0, #1a3826 37%, #3b2b20 43%, #372a20 56%, #17361f 61%, #1a3826 100%);
  position: relative;
}
.widgets { width: 30px; height: 27px; margin-left: 21px; }
.start { width: 29px; height: 29px; margin-left: 397px; }
.searchbox {
  width: 273px;
  height: 40px;
  margin-left: 17px;
  margin-right: 4px;
  box-sizing: border-box;
  border-radius: 20px;
  background: rgba(255, 255, 255, .13);
  display: flex;
  align-items: center;
  padding-left: 15px;
  color: #dfe5e0;
  font-size: 15.5px;
}
.searchbox svg { width: 18px; height: 18px; fill: none; stroke: #eee; stroke-width: 1.5; margin-right: 13px; }
.app { position: relative; width: 55px; flex: none; display: flex; justify-content: center; }
.app > svg:first-child { width: 30px; height: 30px; }
.count {
  position: absolute;
  right: 3px;
  top: -3px;
  width: 20px;
  height: 20px;
  border-radius: 50%;
  background: #e98674;
  color: #222;
  font-size: 13px;
  line-height: 20px;
  text-align: center;
}
.peer { position: absolute; right: 4px; top: -6px; width: 16px; height: 20px; }
.open { position: absolute; left: 25px; top: 36px; width: 6px; height: 4px; border-radius: 2px; background: #9aa09c; }
.tvapp { width: 44px; height: 50px; margin-left: 8px; align-items: center; background: rgba(255, 255, 255, .06); border-radius: 6px; }
.tvicon { width: 31px; height: 30px; border-radius: 6px; background: #111; display: flex; align-items: center; justify-content: center; }
.tvicon svg { width: 21px; height: 13px; }
.tvbar { position: absolute; left: 16px; bottom: 1px; width: 19px; height: 5px; border-radius: 2px; background: #ef8a76; }
.tray { display: flex; align-items: center; color: #fff; height: 100%; position: relative; }
.tray svg { fill: none; stroke: #fff; stroke-width: 1.3; flex: none; }
.t1 { width: 16px; height: 10px; }
.t2 { width: 20px; height: 20px; margin-left: 12px; }
.t2 .rec { fill: #f00; stroke: none; }
.t3 { width: 22px; height: 14px; margin-left: 10px; }
.t4 { width: 22px; height: 18px; margin-left: 13px; }
.t5 { width: 20px; height: 18px; margin-left: 10px; }
.t6 { width: 22px; height: 16px; margin-left: 9px; }
.when { display: flex; flex-direction: column; align-items: flex-end; width: 89px; font-size: 14.5px; line-height: 20px; }
.note { width: 20px; height: 20px; margin: 0 24px 0 9px; border-radius: 50%; background: #ef8a76; color: #222; text-align: center; line-height: 20px; font-size: 13px; }
.brand { position: absolute; left: 1530px; top: 1000px; pointer-events: none; overflow: visible; }
.f { font: italic 700 38px "Liberation Sans", Arial, sans-serif; fill: #111; }
.handle { font: 44px "Liberation Sans", Arial, sans-serif; fill: #fff; }
.handlex { font: 33px "Liberation Sans", Arial, sans-serif; fill: #fff; }
</style>
